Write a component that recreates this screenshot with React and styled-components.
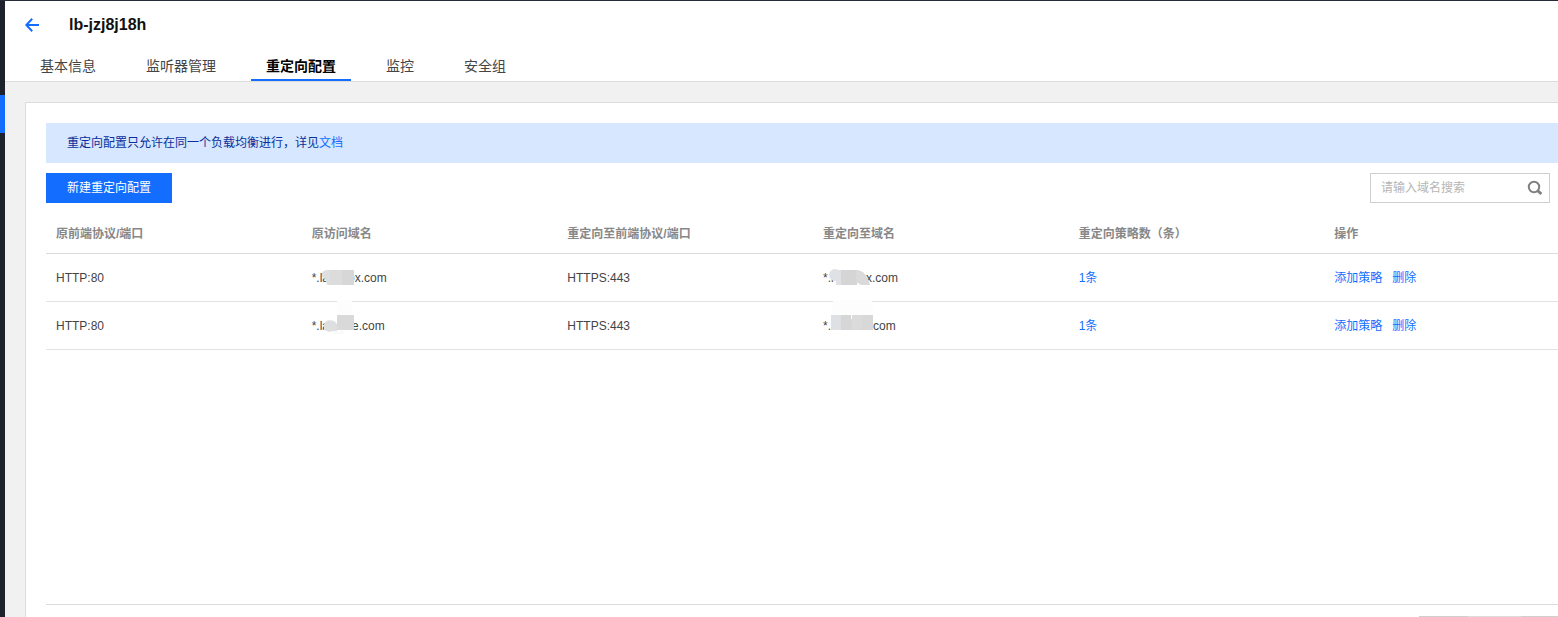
import React from "react";
import styled, { createGlobalStyle } from "styled-components";

const tabs = ["基本信息", "监听器管理", "重定向配置", "监控", "安全组"];

const columns = [
  "原前端协议/端口",
  "原访问域名",
  "重定向至前端协议/端口",
  "重定向至域名",
  "重定向策略数（条）",
  "操作",
];

const rules = [
  {
    id: 1,
    from: "HTTP:80",
    fromDomain: { start: "*.la", end: "ox.com", gap: 19, mask: "pill" },
    to: "HTTPS:443",
    toDomain: { start: "*.r", end: "x.com", gap: 31, mask: "slope" },
    count: 1,
  },
  {
    id: 2,
    from: "HTTP:80",
    fromDomain: { start: "*.la", end: "e.com", gap: 23, mask: "step" },
    to: "HTTPS:443",
    toDomain: { start: "*.", end: "com", gap: 42, mask: "block" },
    count: 1,
  },
];

// brush strokes that hide the middle of a domain
const masks = {
  pill: (
    <>
      <path d="M13 24c-2-1-3-3-3-5 0-3 3-4 6-4h4v15h-5l-1-4z" fill="#dedfe1" />
      <path d="M18 15h12v15H18z" fill="#dcdcdd" />
      <path d="M30 15h12v15H30z" fill="#d7d7d7" />
    </>
  ),
  slope: (
    <>
      <circle cx="12" cy="20" r="6" fill="#e0e1e4" />
      <path d="M12 15h7v15h-6z" fill="#e0e1e4" />
      <path d="M18 15h16v15H18z" fill="#d5d5d5" />
      <path d="M33 15c7 0 12 6 14 15h-9l-5-3z" fill="#dadada" />
    </>
  ),
  step: (
    <>
      <path d="M25 -3h15v15H25z" fill="#fdfdfd" />
      <path d="M12 22c0-5 9-7 13-1v7c-4 2-9 1-13-1z" fill="#dedfe1" />
      <path d="M25 12h17v15H25z" fill="#d9d9d9" />
      <path d="M18 28h14c0 4-8 5-14 0z" fill="#fafafa" />
    </>
  ),
  block: (
    <>
      <path d="M10 -3h39l2 15H9z" fill="#fdfdfd" />
      <path d="M8 12h10v15H8z" fill="#dfe0e3" />
      <path d="M18 12h12v15H18z" fill="#d6d6d7" />
      <path d="M29 12h11v15H29z" fill="#dbdbdb" />
      <path d="M39 12h11v15H39z" fill="#d8d8d8" />
      <path d="M28 12h1v4h-1z" fill="#fff" />
    </>
  ),
};

const Domain = ({ start, end, gap, mask }) => (
  <DomainText>
    {start}
    <Gap $width={gap} />
    {end}
    <Mask width="56" height="32" viewBox="0 0 56 32" aria-hidden="true">
      {masks[mask]}
    </Mask>
  </DomainText>
);

const App = () => {
  return (
    <Page>
      <GlobalStyle />
      <Rail>
        <RailMark />
      </Rail>
      <Main>
        <Header>
          <TitleRow>
            <BackButton type="button" aria-label="返回">
              <svg width="14" height="14" viewBox="0 0 14 14" fill="none" stroke="#136eff" strokeWidth="2">
                <path d="M7.2 0.8 1.3 7l5.9 6.2M1.5 7H14" />
              </svg>
            </BackButton>
            <Title>lb-jzj8j18h</Title>
          </TitleRow>
          <Tabs>
            {tabs.map((tab) => (
              <Tab key={tab} href="#" $active={tab === "重定向配置"}>
                {tab}
              </Tab>
            ))}
          </Tabs>
        </Header>
        <Panel>
          <Notice>
            重定向配置只允许在同一个负载均衡进行，详见<Link href="#">文档</Link>
          </Notice>
          <Toolbar>
            <PrimaryButton type="button">新建重定向配置</PrimaryButton>
            <Search>
              <SearchInput type="text" aria-label="请输入域名搜索" placeholder="请输入域名搜索" />
              <SearchButton type="button" aria-label="搜索">
                <svg width="16" height="16" viewBox="0 0 16 16" fill="none" stroke="#808080">
                  <circle cx="7" cy="7" r="5.2" strokeWidth="2" />
                  <path d="m10.6 10.6 3.8 3.4" strokeWidth="2.8" />
                </svg>
              </SearchButton>
            </Search>
          </Toolbar>
          <TableBox>
            <Table>
              <thead>
                <tr>
                  {columns.map((column) => (
                    <HeadCell key={column}>{column}</HeadCell>
                  ))}
                </tr>
              </thead>
              <tbody>
                {rules.map((rule) => (
                  <tr key={rule.id}>
                    <Cell>{rule.from}</Cell>
                    <Cell>
                      <Domain {...rule.fromDomain} />
                    </Cell>
                    <Cell>{rule.to}</Cell>
                    <Cell>
                      <Domain {...rule.toDomain} />
                    </Cell>
                    <Cell>
                      <Link href="#">{rule.count}条</Link>
                    </Cell>
                    <Cell>
                      <Actions>
                        <Link href="#">添加策略</Link>
                        <Link href="#">删除</Link>
                      </Actions>
                    </Cell>
                  </tr>
                ))}
              </tbody>
            </Table>
          </TableBox>
          <Pager>
            <PagerPart $width={49} $color="#cfcfcf" />
            <PagerPart $width={53} $color="#dddddd" />
            <PagerPart $width={37} $color="#cfcfcf" />
          </Pager>
        </Panel>
      </Main>
    </Page>
  );
};

const GlobalStyle = createGlobalStyle`
  * {
    box-sizing: border-box;
  }

  body {
    margin: 0;
    color: #444;
    font-family: "Liberation Sans", "Noto Sans CJK SC", sans-serif;
    font-size: 12px;
    line-height: 20px;
  }
`;

const Page = styled.div`
  display: flex;
  height: 100vh;
  overflow: hidden;
  border-top: 1px solid #262b3a;
  background-color: #f1f1f1;
`;

const Rail = styled.aside`
  flex: none;
  width: 5px;
  padding-top: 94px;
  background-color: #1e222d;
`;

const RailMark = styled.div`
  height: 38px;
  background-color: #136eff;
`;

const Main = styled.main`
  flex: 1;
  min-width: 0;
  display: flex;
  flex-direction: column;
`;

const Header = styled.header`
  flex: none;
  padding-left: 20px;
  border-bottom: 1px solid #dcdcdc;
  background-color: #fff;
`;

const TitleRow = styled.div`
  display: flex;
  align-items: center;
  gap: 30px;
  height: 48px;
`;

const BackButton = styled.button`
  display: flex;
  padding: 0;
  border: none;
  background: none;
  cursor: pointer;
`;

const Title = styled.h1`
  margin: 0;
  color: #111;
  font-size: 16px;
  font-weight: bold;
`;

const Tabs = styled.nav`
  display: flex;
  gap: 20px;
`;

const Tab = styled.a`
  height: 32px;
  padding: 7px 15px 0;
  border-bottom: 2px solid ${({ $active }) => ($active ? "#136eff" : "transparent")};
  color: ${({ $active }) => ($active ? "#000" : "#444")};
  font-size: 14px;
  font-weight: ${({ $active }) => ($active ? "bold" : "normal")};
  text-decoration: none;
`;

const Panel = styled.section`
  flex: 1;
  margin: 20px 0 0 20px;
  padding: 20px 0 0 20px;
  border: 1px solid #dcdcdc;
  border-width: 1px 0 0 1px;
  background-color: #fff;
`;

const Notice = styled.p`
  margin: 0 0 10px;
  padding: 10px 21px;
  background-color: #d6e7ff;
  color: #0a2f9c;
`;

const Link = styled.a`
  color: #136eff;
  text-decoration: none;
`;

const Toolbar = styled.div`
  display: flex;
  justify-content: space-between;
  margin-bottom: 10px;
  padding-right: 8px;
`;

const PrimaryButton = styled.button`
  height: 30px;
  padding: 0 21px;
  border: none;
  background-color: #136eff;
  color: #fff;
  font: inherit;
  cursor: pointer;
`;

const Search = styled.div`
  display: flex;
  width: 180px;
  height: 30px;
  border: 1px solid #cfcfcf;
  background-color: #fff;
`;

const SearchInput = styled.input`
  flex: 1;
  min-width: 0;
  padding: 0 10px;
  border: none;
  outline: none;
  background: none;
  font: inherit;

  &::placeholder {
    color: #b5b5b5;
  }
`;

const SearchButton = styled.button`
  display: flex;
  align-items: center;
  padding: 0 6px;
  border: none;
  background: none;
  cursor: pointer;
`;

const TableBox = styled.div`
  min-height: 392px;
  overflow: hidden;
  border-bottom: 1px solid #dcdcdc;
`;

// the last column runs on past the edge of the panel
const Table = styled.table`
  width: calc(100% + 22px);
  table-layout: fixed;
  border-collapse: separate;
  border-spacing: 0;
`;

const HeadCell = styled.th`
  height: 41px;
  padding: 2px 10px 0;
  border-bottom: 1px solid #dcdcdc;
  color: #888;
  font-weight: bold;
  text-align: left;
`;

const Cell = styled.td`
  height: 48px;
  padding: 0 10px;
  border-bottom: 1px solid #e2e2e2;
`;

const DomainText = styled.span`
  position: relative;
  display: inline-flex;
`;

const Gap = styled.span`
  width: ${({ $width }) => $width}px;
`;

const Mask = styled.svg`
  position: absolute;
  top: -13px;
  left: 0;
  overflow: visible;
`;

const Actions = styled.div`
  display: flex;
  gap: 10px;
`;

const Pager = styled.div`
  display: flex;
  justify-content: flex-end;
  padding-top: 11px;
`;

const PagerPart = styled.span`
  width: ${({ $width }) => $width}px;
  height: 30px;
  border-top: 1px solid ${({ $color }) => $color};
`;

export default App;
